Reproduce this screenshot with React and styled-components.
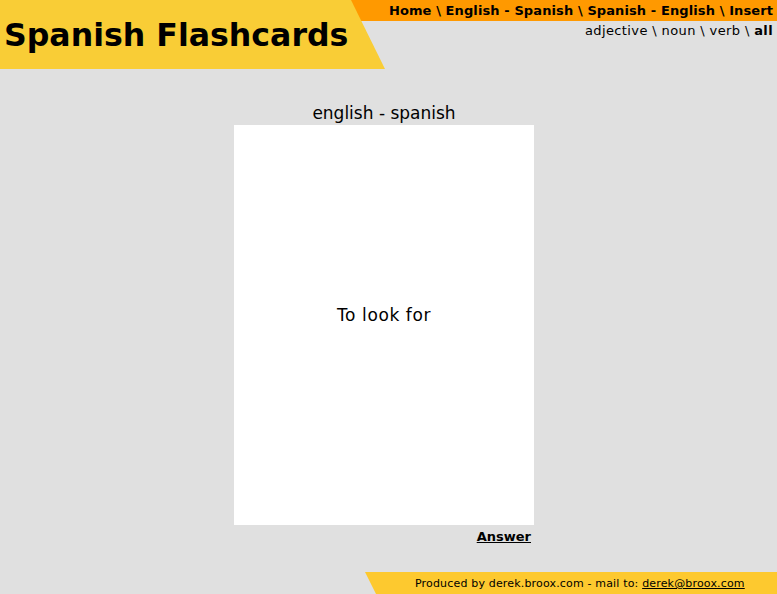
import React from "react";
import styled, { createGlobalStyle } from "styled-components";

const Global = createGlobalStyle`
  html, body { margin: 0; padding: 0; background: #e0e0e0; }
  body { font-family: "DejaVu Sans", Verdana, sans-serif; color: #000; }
`;

const Page = styled.div`
  min-height: 594px;
  display: flex;
  flex-direction: column;
`;

const Header = styled.header`
  display: flex;
  height: 69px;
  background: linear-gradient(#ff9900 0 21px, transparent 21px);
`;

const Logo = styled.div`
  width: 385px;
  flex: none;
  background: #f9cd36;
  clip-path: polygon(0 0, 351px 0, 385px 100%, 0 100%);
  display: flex;
  align-items: center;
  padding-left: 4px;
  box-sizing: border-box;
`;

const Title = styled.h1`
  margin: 0;
  font-size: 31.6px;
  font-weight: bold;
`;

const NavCol = styled.div`
  flex: 1;
  display: flex;
  flex-direction: column;
  align-items: flex-end;
  padding-right: 4px;
`;

const NavRow = styled.nav`
  height: ${(p) => p.$h}px;
  line-height: ${(p) => p.$h}px;
  padding-top: ${(p) => p.$pt || 0}px;
  font-size: 13px;
  font-weight: ${(p) => (p.$bold ? "bold" : "normal")};
  letter-spacing: ${(p) => p.$ls}px;
  white-space: nowrap;
`;

const NavLink = styled.a`
  color: #000;
  text-decoration: none;
  font-weight: ${(p) => (p.$bold ? "bold" : "inherit")};
`;

const Main = styled.main`
  display: flex;
  justify-content: center;
  padding: 33px 9px 0 0;
`;

const Column = styled.div`
  width: 300px;
  display: flex;
  flex-direction: column;
`;

const CardTitle = styled.div`
  text-align: center;
  font-size: 17px;
  line-height: 23px;
  padding-top: 1px;
  margin-top: -1px;
`;

const Card = styled.div`
  height: 400px;
  box-sizing: border-box;
  padding-bottom: 20px;
  background: #fff;
  display: flex;
  align-items: center;
  justify-content: center;
  font-size: 17px;
  letter-spacing: 0.6px;
`;

const AnswerRow = styled.div`
  display: flex;
  justify-content: flex-end;
  padding: 4px 3px 0 0;
`;

const Answer = styled.a`
  color: #000;
  font-size: 13px;
  font-weight: bold;
  text-decoration: underline;
`;

const Footer = styled.footer`
  margin-top: auto;
  display: flex;
  justify-content: flex-end;
`;

const FooterBar = styled.div`
  width: 412px;
  height: 22px;
  background: #fdc92f;
  clip-path: polygon(0 0, 100% 0, 100% 100%, 11px 100%);
  font-size: 11px;
  letter-spacing: 0.17px;
  line-height: 23px;
  padding-left: 50px;
  box-sizing: border-box;
  white-space: nowrap;
`;

const Mail = styled.a`
  color: #000;
  text-decoration: underline;
`;

export default function App() {
  return (
    <Page>
      <Global />
      <Header>
        <Logo>
          <Title>Spanish Flashcards</Title>
        </Logo>
        <NavCol>
          <NavRow $h={21} $ls={0.1} $bold>
            <NavLink>Home</NavLink> \ <NavLink>English - Spanish</NavLink> \{" "}
            <NavLink>Spanish - English</NavLink> \ <NavLink>Insert</NavLink>
          </NavRow>
          <NavRow $h={18} $pt={1} $ls={0.38}>
            <NavLink>adjective</NavLink> \ <NavLink>noun</NavLink> \{" "}
            <NavLink>verb</NavLink> \ <NavLink $bold>all</NavLink>
          </NavRow>
        </NavCol>
      </Header>
      <Main>
        <Column>
          <CardTitle>english - spanish</CardTitle>
          <Card>To look for</Card>
          <AnswerRow>
            <Answer>Answer</Answer>
          </AnswerRow>
        </Column>
      </Main>
      <Footer>
        <FooterBar>
          Produced by derek.broox.com - mail to: <Mail>derek@broox.com</Mail>
        </FooterBar>
      </Footer>
    </Page>
  );
}
